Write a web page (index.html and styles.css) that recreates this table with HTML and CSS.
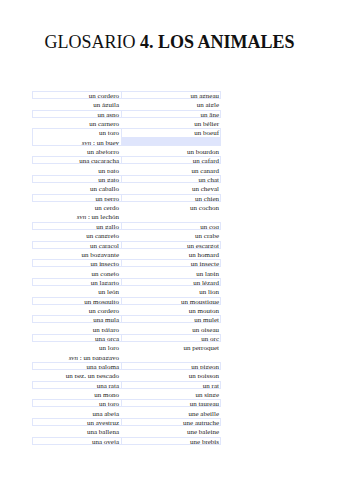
FILE: index.html
```html
<!DOCTYPE html>
<html>
<head>
<meta charset="utf-8">
<link rel="stylesheet" href="styles.css">
</head>
<body>
<h1 class="title">GLOSARIO <b>4. LOS ANIMALES</b></h1>
<div class="glossary">
  <div class="row box"><div class="es">un cordero</div><div class="fr">un agneau</div></div>
  <div class="row"><div class="es">un águila</div><div class="fr">un aigle</div></div>
  <div class="row box"><div class="es">un asno</div><div class="fr">un âne</div></div>
  <div class="row"><div class="es">un carnero</div><div class="fr">un bélier</div></div>
  <div class="row box double"><div class="es">un toro<br><i>syn</i> : un buey</div><div class="fr fill">un boeuf</div></div>
  <div class="row"><div class="es">un abejorro</div><div class="fr">un bourdon</div></div>
  <div class="row box"><div class="es">una cucaracha</div><div class="fr">un cafard</div></div>
  <div class="row"><div class="es">un pato</div><div class="fr">un canard</div></div>
  <div class="row box"><div class="es">un gato</div><div class="fr">un chat</div></div>
  <div class="row"><div class="es">un caballo</div><div class="fr">un cheval</div></div>
  <div class="row box"><div class="es">un perro</div><div class="fr">un chien</div></div>
  <div class="row double"><div class="es">un cerdo<br><i>syn</i> : un lechón</div><div class="fr">un cochon</div></div>
  <div class="row box"><div class="es">un gallo</div><div class="fr">un coq</div></div>
  <div class="row"><div class="es">un cangrejo</div><div class="fr">un crabe</div></div>
  <div class="row box"><div class="es">un caracol</div><div class="fr">un escargot</div></div>
  <div class="row"><div class="es">un bogavante</div><div class="fr">un homard</div></div>
  <div class="row box"><div class="es">un insecto</div><div class="fr">un insecte</div></div>
  <div class="row"><div class="es">un conejo</div><div class="fr">un lapin</div></div>
  <div class="row box"><div class="es">un lagarto</div><div class="fr">un lézard</div></div>
  <div class="row"><div class="es">un león</div><div class="fr">un lion</div></div>
  <div class="row box"><div class="es">un mosquito</div><div class="fr">un moustique</div></div>
  <div class="row"><div class="es">un cordero</div><div class="fr">un mouton</div></div>
  <div class="row box"><div class="es">una mula</div><div class="fr">un mulet</div></div>
  <div class="row"><div class="es">un pájaro</div><div class="fr">un oiseau</div></div>
  <div class="row box"><div class="es">una orca</div><div class="fr">un orc</div></div>
  <div class="row double"><div class="es">un loro<br><i>syn</i> : un papagayo</div><div class="fr">un perroquet</div></div>
  <div class="row box"><div class="es">una paloma</div><div class="fr">un pigeon</div></div>
  <div class="row"><div class="es">un pez, un pescado</div><div class="fr">un poisson</div></div>
  <div class="row box"><div class="es">una rata</div><div class="fr">un rat</div></div>
  <div class="row"><div class="es">un mono</div><div class="fr">un singe</div></div>
  <div class="row box"><div class="es">un toro</div><div class="fr">un taureau</div></div>
  <div class="row"><div class="es">una abeja</div><div class="fr">une abeille</div></div>
  <div class="row box"><div class="es">un avestruz</div><div class="fr">une autruche</div></div>
  <div class="row"><div class="es">una ballena</div><div class="fr">une baleine</div></div>
  <div class="row box"><div class="es">una oveja</div><div class="fr">une brebis</div></div>
</div>
</body>
</html>
```

FILE: styles.css
```css
html, body {
  margin: 0;
  padding: 0;
  background: #ffffff;
}
body {
  font-family: "Liberation Serif", "Times New Roman", serif;
  color: #222;
}
.title {
  margin: 0;
  padding-top: 30px;
  height: 62px;
  box-sizing: border-box;
  text-align: center;
  font-size: 18px;
  font-weight: normal;
  line-height: 24px;
  color: #111;
}
.title b {
  font-weight: bold;
}
.glossary {
  margin-left: 32px;
  margin-top: 29px;
  width: 189px;
  font-size: 7px;
}
.row {
  display: grid;
  grid-template-columns: 90px 99px;
  height: 9.35px;
}
.row.double {
  height: 18.7px;
}
.es, .fr {
  box-sizing: border-box;
  height: 8px;
  line-height: 8px;
  text-align: right;
  padding-right: 2px;
  border: 1px solid transparent;
  white-space: nowrap;
  overflow: hidden;
}
.double .es, .double .fr {
  height: 17.35px;
}
.double .es {
  line-height: 9.35px;
}
.es i {
  font-style: italic;
}
.fr {
  padding-right: 1px;
  margin-left: -1px;
}
.box .es, .box .fr {
  border-color: #e0e6fb;
}
.fr.fill {
  background: linear-gradient(#ffffff 0, #ffffff 8px, #dfe5fc 8px);
}
.double .fr {
  line-height: 8px;
}
```
